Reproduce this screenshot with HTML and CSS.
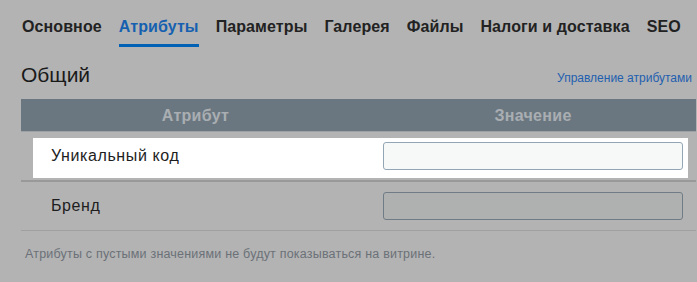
FILE: index.html
```html
<!DOCTYPE html>
<html lang="ru">
<head>
  <meta charset="UTF-8" />
  <meta name="viewport" content="width=device-width, initial-scale=1.0" />
  <title>Атрибуты товара</title>
  <link rel="stylesheet" href="styles.css">
</head>
<body>
  <div class="page">
    <nav class="tabs">
      <a class="tab">Основное</a>
      <a class="tab active">Атрибуты</a>
      <a class="tab">Параметры</a>
      <a class="tab">Галерея</a>
      <a class="tab">Файлы</a>
      <a class="tab">Налоги и доставка</a>
      <a class="tab">SEO</a>
    </nav>

    <div class="section-head">
      <h2>Общий</h2>
      <a class="manage-link">Управление атрибутами</a>
    </div>

    <div class="attr-table">
      <div class="attr-head">
        <div class="col-name">Атрибут</div>
        <div class="col-value">Значение</div>
      </div>

      <!-- подсвеченная строка (подсказка) -->
      <div class="attr-row first">
        <div class="spot">
          <label class="spot-name" for="sku">Уникальный код</label>
          <input type="text" id="sku" class="field" />
        </div>
      </div>

      <div class="attr-row">
        <label class="row-name" for="brand">Бренд</label>
        <input type="text" id="brand" class="field dim" />
      </div>
    </div>

    <p class="note">Атрибуты с пустыми значениями не будут показываться на витрине.</p>
  </div>
</body>
</html>
```

FILE: styles.css
```css
body {
  margin: 0;
  padding: 0;
  background: #b3b3b3;
  font-family: "Liberation Sans", Arial, sans-serif;
  color: #1e1e1e;
}

.page {
  padding: 0 1px 0 21px;
}

.tabs {
  display: flex;
  gap: 17px;
  padding-left: 1px;
}

.tab {
  padding-top: 17px;
  padding-bottom: 7px;
  line-height: 20px;
  font-size: 16px;
  font-weight: bold;
  letter-spacing: 0.1px;
  color: #222;
  border-bottom: 3px solid transparent;
  cursor: pointer;
}

.tab.active {
  color: #1660b0;
  border-bottom-color: #0061b5;
}

.section-head {
  display: flex;
  justify-content: space-between;
  align-items: baseline;
  margin-top: 16px;
  padding-right: 4px;
}

h2 {
  margin: 0;
  font-size: 21px;
  line-height: 24px;
  font-weight: normal;
  color: #1a1a1a;
}

.manage-link {
  font-size: 12px;
  color: #1f5fb0;
  cursor: pointer;
}

.attr-table {
  margin-top: 12px;
}

.attr-head {
  display: flex;
  background: #6b7780;
  color: #a9aeb2;
  font-size: 16px;
  font-weight: bold;
  letter-spacing: 0.3px;
  line-height: 30px;
  padding-top: 2px;
  border-bottom: 1px solid #9ba1a5;
  text-align: center;
}

.col-name {
  width: 349px;
}

.col-value {
  flex: 1;
}

.attr-row {
  display: flex;
  align-items: center;
  height: 48px;
  border-bottom: 1px solid #a0a0a0;
  font-size: 16px;
  letter-spacing: 0.6px;
}

.attr-row.first {
  align-items: stretch;
  height: auto;
  padding: 6px 8px 2px 12px;
  border-bottom: 2px solid #999;
}

.spot {
  flex: 1;
  display: flex;
  align-items: center;
  background: #fff;
  padding: 4px 5px 8px 18px;
}

.spot-name {
  width: 319px;
}

.row-name {
  width: 319px;
  padding-left: 30px;
}

.field {
  width: 300px;
  height: 28px;
  margin-left: 13px;
  box-sizing: border-box;
  border: 1px solid #93a6b5;
  border-radius: 3px;
  background: #f7f9f9;
  font-size: 14px;
}

.field.dim {
  background: #afb1b0;
  border-color: #6f7c85;
}

.note {
  margin: 15px 0 0;
  padding-left: 4px;
  font-size: 12.5px;
  letter-spacing: 0.2px;
  line-height: 16px;
  color: #6b7178;
}
```
